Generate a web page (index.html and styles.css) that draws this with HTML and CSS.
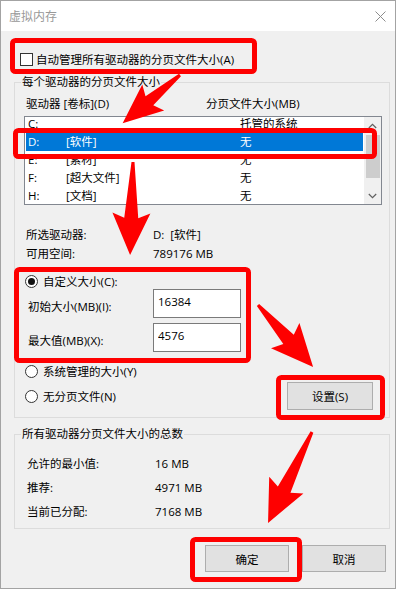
FILE: index.html
```html
<!DOCTYPE html>
<html lang="zh-CN">
<head>
  <meta charset="UTF-8">
  <title>虚拟内存</title>
  <link rel="stylesheet" href="styles.css">
</head>
<body>
  <div class="window">
    <div class="titlebar">
      <span class="title">虚拟内存</span>
      <svg class="close" width="11" height="11" viewBox="0 0 11 11">
        <path d="M0.5 0.5 L10.5 10.5 M10.5 0.5 L0.5 10.5" stroke="#8c8c8c" stroke-width="1" fill="none"/>
      </svg>
    </div>

    <div class="content">
      <div class="check-row">
        <span class="checkbox"></span>
        <span>自动管理所有驱动器的分页文件大小(A)</span>
      </div>

      <fieldset class="group">
        <legend>每个驱动器的分页文件大小</legend>
        <div class="list-head">
          <span class="col-drive">驱动器 [卷标](D)</span>
          <span>分页文件大小(MB)</span>
        </div>

        <div class="listbox">
          <div class="rows">
            <div class="row"><span class="c1">C:</span><span class="c2"></span><span>托管的系统</span></div>
            <div class="row selected"><span class="c1">D:</span><span class="c2">[软件]</span><span>无</span></div>
            <div class="row"><span class="c1">E:</span><span class="c2">[素材]</span><span>无</span></div>
            <div class="row"><span class="c1">F:</span><span class="c2">[超大文件]</span><span>无</span></div>
            <div class="row"><span class="c1">H:</span><span class="c2">[文档]</span><span>无</span></div>
          </div>
          <div class="scrollbar">
            <div class="sb-btn">
              <svg width="9" height="6" viewBox="0 0 9 6"><path d="M0.8 5 L4.5 1.3 L8.2 5" stroke="#606060" stroke-width="1.2" fill="none"/></svg>
            </div>
            <div class="sb-track"><div class="sb-thumb"></div></div>
            <div class="sb-btn">
              <svg width="9" height="6" viewBox="0 0 9 6"><path d="M0.8 1 L4.5 4.7 L8.2 1" stroke="#606060" stroke-width="1.2" fill="none"/></svg>
            </div>
          </div>
        </div>

        <div class="info">
          <div class="info-row"><span class="info-label">所选驱动器:</span><span>D:&nbsp;&nbsp;[软件]</span></div>
          <div class="info-row"><span class="info-label">可用空间:</span><span>789176 MB</span></div>
        </div>

        <div class="radio-row custom">
          <span class="radio checked"></span>
          <span>自定义大小(C):</span>
        </div>
        <div class="size-row">
          <span class="size-label">初始大小(MB)(I):</span>
          <input class="size-input" type="text" value="16384" readonly>
        </div>
        <div class="size-row">
          <span class="size-label">最大值(MB)(X):</span>
          <input class="size-input" type="text" value="4576" readonly>
        </div>
        <div class="radio-row system">
          <span class="radio"></span>
          <span>系统管理的大小(Y)</span>
        </div>
        <div class="last-row">
          <div class="radio-row">
            <span class="radio"></span>
            <span>无分页文件(N)</span>
          </div>
          <button class="btn btn-set">设置(S)</button>
        </div>
      </fieldset>

      <fieldset class="group totals">
        <legend>所有驱动器分页文件大小的总数</legend>
        <div class="total-row"><span class="total-label">允许的最小值:</span><span>16 MB</span></div>
        <div class="total-row"><span class="total-label">推荐:</span><span>4971 MB</span></div>
        <div class="total-row"><span class="total-label">当前已分配:</span><span>7168 MB</span></div>
      </fieldset>

      <div class="buttons">
        <button class="btn">确定</button>
        <button class="btn">取消</button>
      </div>
    </div>
  </div>

  <!-- red annotation marks drawn over the dialog -->
  <svg class="overlay" width="396" height="589" viewBox="0 0 396 589">
    <g fill="none" stroke="#fe0000" stroke-width="5">
      <rect x="12.5" y="40.5" width="242" height="31" rx="3"/>
      <rect x="15.5" y="130.5" width="359" height="26" rx="3"/>
      <rect x="16.5" y="269.5" width="232" height="91" rx="3"/>
      <rect x="278.5" y="377.5" width="104" height="40" rx="3"/>
      <rect x="192.5" y="539.5" width="107" height="40" rx="3"/>
    </g>
    <g fill="#fe0000">
      <polygon transform="translate(180 75) rotate(139.9)" points="0,-1.5 40,-6 35,-17 75,0 35,17 40,6 0,1.5"/>
      <polygon transform="translate(133 162) rotate(91.8)" points="0,-1.5 56,-7 51,-19 93,0 51,19 56,7 0,1.5"/>
      <polygon transform="translate(258 305) rotate(48.4)" points="0,-1.5 46,-7 41,-19 83,0 41,19 46,7 0,1.5"/>
      <polygon transform="translate(312 432) rotate(115.8)" points="0,-1.5 64,-7 59,-19 101,0 59,19 64,7 0,1.5"/>
    </g>
  </svg>
</body>
</html>
```

FILE: styles.css
```css
* { box-sizing: border-box; }
body {
  margin: 0;
  position: relative;
  font-family: "Open Sans", "Noto Sans CJK SC", sans-serif;
  font-size: 11.5px;
  color: #000;
  background: #fff;
}

.window {
  width: 396px;
  height: 589px;
  border: 1px solid #a3a3a3;
  background: #f0f0f0;
  overflow: hidden;
}
.titlebar {
  height: 30px;
  background: #fff;
  display: flex;
  align-items: center;
  justify-content: space-between;
  padding: 0 9px 0 8px;
}
.title { font-size: 12px; color: #999; }

.content { padding: 20px 5px 0 13px; }

.check-row {
  display: flex;
  align-items: center;
  gap: 3px;
  height: 16px;
  margin-left: 6px;
}
.checkbox {
  width: 13px;
  height: 13px;
  border: 1px solid #333;
  background: #fff;
}

.group {
  margin: 7px 0 0;
  padding: 6px 7px 7px 9px;
  border: 1px solid #dcdcdc;
  min-width: 0;
}
.group legend {
  padding: 0 1px;
  margin-left: -3px;
  line-height: 16px;
}

.list-head {
  display: flex;
  line-height: 16px;
  padding-left: 2px;
}
.col-drive { width: 180px; }

.listbox {
  display: flex;
  margin-top: 4px;
  height: 89px;
  border: 1px solid #828790;
  background: #fff;
}
.rows {
  flex: 1;
  overflow: hidden;
  padding: 0 1px;
}
.row {
  display: flex;
  height: 18px;
  line-height: 18px;
  padding-left: 2px;
}
.rows .row:first-child { margin-top: -2px; }
.row.selected { background: #0078d7; color: #fff; }
.c1 { width: 38px; }
.c2 { width: 174px; }

.scrollbar {
  width: 17px;
  display: flex;
  flex-direction: column;
  background: #f0f0f0;
}
.sb-btn {
  height: 17px;
  display: flex;
  align-items: center;
  justify-content: center;
}
.sb-track { flex: 1; padding-top: 1px; }
.sb-thumb { height: 43px; margin: 0 1px 0 2px; background: #cdcdcd; }

.info { margin-top: 20px; padding-left: 2px; }
.info-row { display: flex; line-height: 19px; }
.info-label { width: 127px; }

.radio-row {
  display: flex;
  align-items: center;
  gap: 5px;
  height: 16px;
  padding-left: 1px;
}
.radio-row.custom { margin-top: 10px; }
.radio-row.system { margin-top: 11px; }
.radio {
  width: 13px;
  height: 13px;
  border: 1px solid #333;
  border-radius: 50%;
  background: #fff;
  display: flex;
  align-items: center;
  justify-content: center;
}
.radio.checked::after {
  content: "";
  width: 7px;
  height: 7px;
  border-radius: 50%;
  background: #111;
}

.size-row {
  display: flex;
  align-items: center;
  padding-left: 4px;
  margin-bottom: 5px;
}
.size-label { width: 125px; padding-top: 4px; }
.size-input {
  width: 88px;
  height: 29px;
  border: 1px solid #7a7a7a;
  background: #fff;
  padding: 0 4px 5px;
  font: inherit;
  color: #000;
  outline: none;
}

.last-row {
  display: flex;
  align-items: center;
  justify-content: space-between;
  margin-top: 3px;
  height: 28px;
}

.btn {
  font: inherit;
  color: #000;
  background: #e1e1e1;
  border: 1px solid #adadad;
  padding: 0;
}
.btn-set { width: 86px; height: 28px; margin-right: 9px; }

.totals { margin-top: 8px; padding: 10px 7px 4px 9px; }
.total-row { display: flex; height: 24px; line-height: 24px; padding-left: 3px; }
.total-label { width: 128px; }

.buttons {
  display: flex;
  justify-content: flex-end;
  gap: 13px;
  margin: 16px 4px 0 0;
}
.buttons .btn { width: 84px; height: 27px; }

.overlay {
  position: absolute;
  top: 0;
  left: 0;
}
```
